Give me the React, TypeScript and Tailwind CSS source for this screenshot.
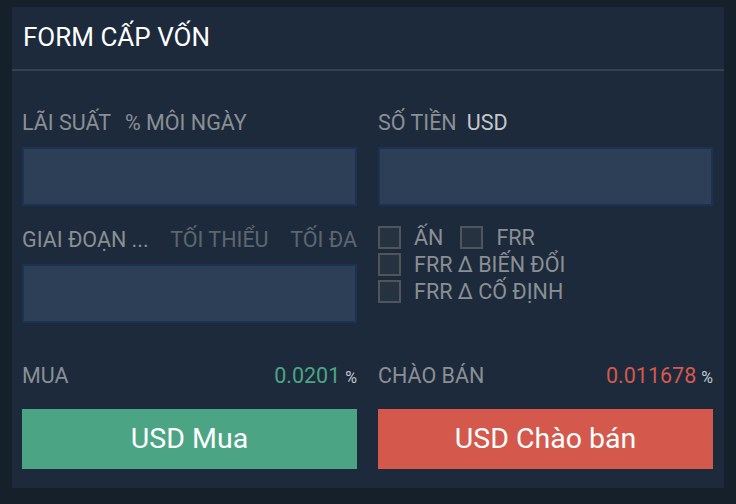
import React from 'react';

const Checkbox: React.FC<{ label: string }> = ({ label }) => (
  <label className="flex items-center gap-[13px] cursor-pointer">
    <span className="w-[23px] h-[23px] border-2 border-[#4f555b] bg-[#25323f]" />
    <span>{label}</span>
  </label>
);

const App: React.FC = () => {
  return (
    <div className="w-[736px] h-[504px] bg-[#16202b] overflow-hidden pt-[7px] pl-[12px] font-['Roboto','Liberation_Sans',sans-serif]">
      <div className="w-[712px] bg-[#1d2a3b]">
        {/* Header */}
        <div className="h-[64px] flex items-center pl-[11px] pb-[2px] border-b-2 border-[#36414c]">
          <h2 className="text-[26px] text-white leading-none">FORM CẤP VỐN</h2>
        </div>

        {/* Form body */}
        <div className="pl-[10px] pr-[11px] pt-[41px] pb-[19px] text-[21.5px] text-[#8a8f94]">
          <div className="grid grid-cols-2 gap-x-[21px]">
            <div>
              <div className="h-[22px] flex items-center gap-[14px] mb-[13px] leading-none">
                <span>LÃI SUẤT</span>
                <span>% MÔI NGÀY</span>
              </div>
              <input className="w-full h-[59px] bg-[#2c3f56] border-2 border-[#1c3252] outline-none text-white px-3" />
            </div>
            <div>
              <div className="h-[22px] flex items-center gap-[10px] mb-[13px] leading-none">
                <span>SỐ TIỀN</span>
                <span className="text-[#c4c8cc]">USD</span>
              </div>
              <input className="w-full h-[59px] bg-[#2c3f56] border-2 border-[#1c3252] outline-none text-white px-3" />
            </div>

            <div className="mt-[23px]">
              <div className="h-[22px] flex items-center justify-between mb-[13px] leading-none">
                <span>GIAI ĐOẠN ...</span>
                <span className="text-[#5d6670]">TỐI THIỂU</span>
                <span className="text-[#5d6670]">TỐI ĐA</span>
              </div>
              <input className="w-full h-[59px] bg-[#2c3f56] border-2 border-[#1c3252] outline-none text-white px-3" />
            </div>
            <div className="mt-[20px] flex flex-col gap-[4px] leading-[23px]">
              <div className="flex items-center gap-[17px]">
                <Checkbox label="ẤN" />
                <Checkbox label="FRR" />
              </div>
              <Checkbox label="FRR Δ BIẾN ĐỔI" />
              <Checkbox label="FRR Δ CỐ ĐỊNH" />
            </div>

            <div className="mt-[42px]">
              <div className="h-[22px] flex items-center justify-between mb-[22px] leading-none">
                <span>MUA</span>
                <span className="flex items-baseline gap-[5px]">
                  <span className="text-[#4ba584]">0.0201</span>
                  <span className="text-[16px] text-[#c4c8cc]">%</span>
                </span>
              </div>
              <button className="w-full h-[60px] bg-[#4ba584] text-white text-[28.5px]">USD Mua</button>
            </div>
            <div className="mt-[42px]">
              <div className="h-[22px] flex items-center justify-between mb-[22px] leading-none">
                <span>CHÀO BÁN</span>
                <span className="flex items-baseline gap-[5px]">
                  <span className="text-[#d4594c]">0.011678</span>
                  <span className="text-[16px] text-[#c4c8cc]">%</span>
                </span>
              </div>
              <button className="w-full h-[60px] bg-[#d4594c] text-white text-[28.5px]">USD Chào bán</button>
            </div>
          </div>
        </div>
      </div>
      <div className="w-[712px] h-[20px] mt-[16px] bg-[#1d2a3b]" />
    </div>
  );
};

export default App;
